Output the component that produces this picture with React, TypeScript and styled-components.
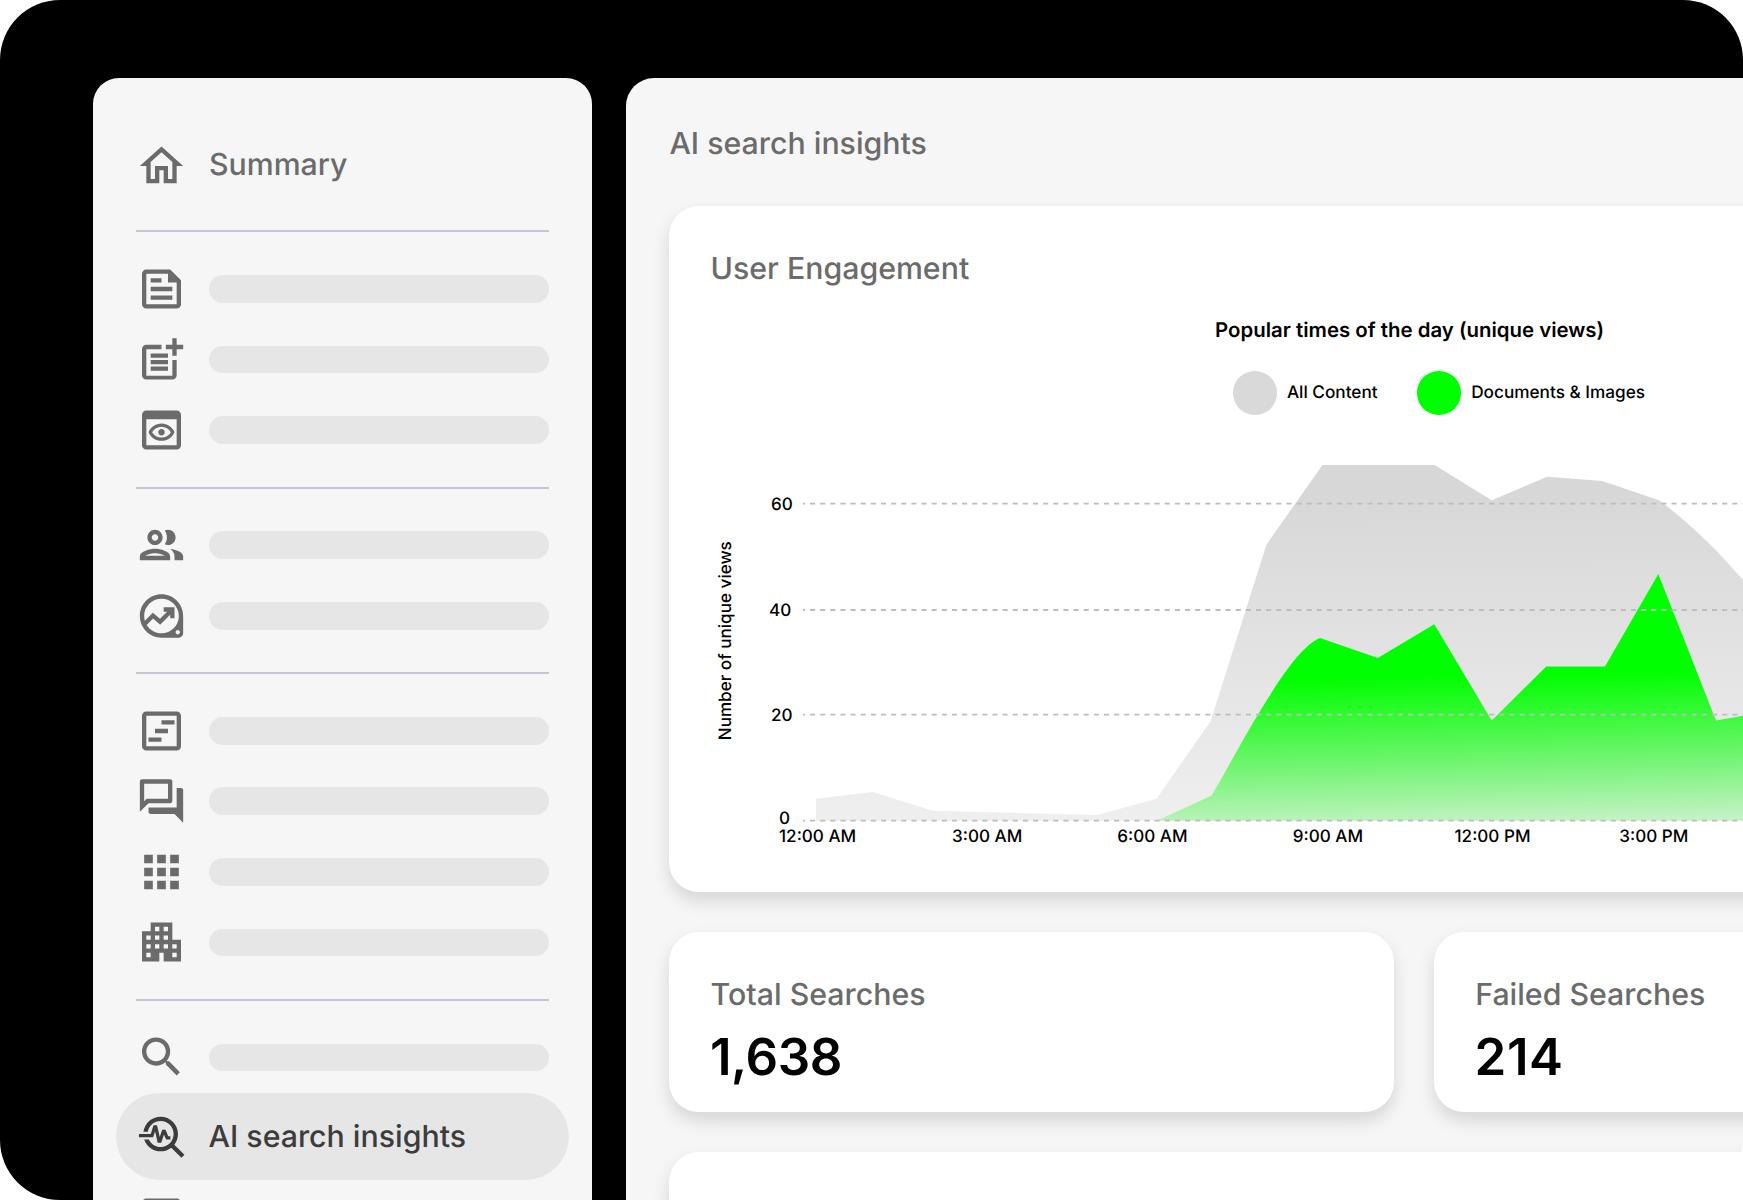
import React from 'react';
import styled, { createGlobalStyle } from 'styled-components';
import type { IconType } from 'react-icons';
import {
  MdApartment,
  MdApps,
  MdOutlineDataExploration,
  MdOutlineFeed,
  MdOutlineHome,
  MdOutlinePeople,
  MdOutlinePreview,
  MdOutlineQuestionAnswer,
  MdOutlineViewTimeline,
  MdPostAdd,
  MdSearch,
  MdTroubleshoot,
} from 'react-icons/md';

const GlobalStyle = createGlobalStyle`
  * { box-sizing: border-box; }
  body { margin: 0; background: #fff; text-rendering: geometricPrecision; }
`;

const Frame = styled.div`
  display: flex;
  gap: 34px;
  width: 1743px;
  height: 1200px;
  padding: 78px 0 0 93px;
  overflow: hidden;
  background:
    linear-gradient(#000, #000) 0 0 / 100% 120px no-repeat,
    linear-gradient(#000, #000) 0 0 / 700px 100% no-repeat;
  border-radius: 60px;
  font-family: Inter, 'Liberation Sans', sans-serif;
`;

const Sidebar = styled.nav`
  display: flex;
  flex-direction: column;
  flex: none;
  width: 499px;
  height: 1160px;
  padding: 51.7px 23px 0;
  background: #f6f6f6;
  border-radius: 26px 26px 0 0;
`;

const Group = styled.div`
  display: flex;
  flex-direction: column;
  flex: none;
  margin: 0 20.2px;
  padding: 21.2px 0;
  border-top: 2px solid #c8c4d0;
`;

const Item = styled.div<{ $active?: boolean; $tall?: boolean }>`
  display: flex;
  align-items: center;
  gap: 21.5px;
  flex: none;
  height: ${(p) => (p.$active ? 87.6 : p.$tall ? 72 : 70.6)}px;
  margin: ${(p) => (p.$active ? '0 -20.3px 2px' : '0')};
  padding: ${(p) => (p.$active ? '0 19.8px' : '0')};
  border-radius: 44px;
  background: ${(p) => (p.$active ? '#e6e6e6' : 'transparent')};
  color: ${(p) => (p.$active ? '#3c3c3c' : '#6b6b6b')};

  svg {
    flex: none;
    width: 52px;
    height: 52px;
    margin-left: -0.7px;
    transform: ${(p) => (p.$active ? 'translate(1.8px, -0.8px)' : 'translateX(-0.5px)')};
  }
`;

const Top = styled.div`
  flex: none;
  height: 100.8px;
  margin: 0 20.2px;

  span {
    margin-bottom: 1px;
  }
`;

const Placeholder = styled.div`
  flex: 1;
  height: 27.7px;
  border-radius: 14px;
  background: #e6e6e6;
`;

const Label = styled.span`
  font-size: 30.3px;
  font-weight: 500;
  line-height: 40px;
  white-space: nowrap;
`;

const Main = styled.main`
  display: flex;
  flex-direction: column;
  flex: none;
  width: 1576px;
  height: 1160px;
  padding: 46px 43.4px 0;
  background: #f6f6f6;
  border-radius: 28px 28px 0 0;
`;

const Heading = styled(Label).attrs({ as: 'h2' })`
  margin: 0;
  color: #6b6b6b;
`;

const Card = styled.section<{ $height: number }>`
  display: flex;
  flex-direction: column;
  flex: 1 0 auto;
  height: ${(p) => p.$height}px;
  padding: 43px 41.2px 0;
  background: #fff;
  border-radius: 30px;
  box-shadow: 0 8.7px 17.3px rgba(0, 0, 0, 0.13);
`;

const Stack = styled.div`
  display: flex;
  flex-direction: column;
  gap: 40.3px;
  margin-top: 41.7px;

  > ${Card} {
    flex: none;
  }
`;

const Stats = styled.div`
  display: grid;
  grid-template-columns: 1fr 1fr;
  gap: 40px;
`;

const Value = styled.strong<{ $spacing: number }>`
  margin: 12.7px 0 0 -0.7px;
  font-size: 51px;
  font-weight: 600;
  line-height: 60px;
  letter-spacing: ${(p) => p.$spacing}px;
  color: #000;
`;

const ChartTitle = styled.h3`
  margin: 28.4px 0 0 504.5px;
  font-size: 20.4px;
  font-weight: 600;
  line-height: 26px;
  white-space: nowrap;
`;

const Legend = styled.div`
  display: flex;
  gap: 39.8px;
  margin: 28px 0 0 522.5px;
`;

const LegendItem = styled.div<{ $color: string }>`
  display: flex;
  align-items: center;
  gap: 10.3px;

  &::before {
    content: '';
    width: 43.5px;
    height: 43.5px;
    border-radius: 50%;
    background: ${(p) => p.$color};
  }
`;

const LegendText = styled.span`
  margin-top: 1px;
  font-size: 17.2px;
  font-weight: 500;
  line-height: 24px;
`;

const Chart = styled.svg`
  flex: none;
  display: block;
  width: 1405px;
  height: 410px;
  margin-top: 35.5px;

  text {
    font-size: 17.1px;
    font-weight: 500;
    fill: #000;
  }
`;

const groups: IconType[][] = [
  [MdOutlineFeed, MdPostAdd, MdOutlinePreview],
  [MdOutlinePeople, MdOutlineDataExploration],
  [MdOutlineViewTimeline, MdOutlineQuestionAnswer, MdApps, MdApartment],
];

const gridLines = [503.7, 610, 714.7, 820.7];

const yLabels = [
  { text: '60', x: 771, y: 510.2 },
  { text: '40', x: 769, y: 616.2 },
  { text: '20', x: 771, y: 721.2 },
  { text: '0', x: 779, y: 824.3 },
];

const xLabels = [
  { text: '12:00 AM', x: 779 },
  { text: '3:00 AM', x: 952 },
  { text: '6:00 AM', x: 1117.3 },
  { text: '9:00 AM', x: 1292.7 },
  { text: '12:00 PM', x: 1454.5 },
  { text: '3:00 PM', x: 1619.3 },
];

const Placeholders = ({ icons }: { icons: IconType[] }) => (
  <>
    {icons.map((Icon, i) => (
      <Item key={i}>
        <Icon />
        <Placeholder />
      </Item>
    ))}
  </>
);

const EngagementChart = () => (
  <Chart viewBox="711 450 1405 410">
    <defs>
      <linearGradient id="all" gradientUnits="userSpaceOnUse" x1="1400" y1="490" x2="1402" y2="821">
        <stop offset="0" stopColor="#d7d7d7" />
        <stop offset="1" stopColor="#efefef" />
      </linearGradient>
      <linearGradient id="docs" gradientUnits="userSpaceOnUse" x1="1430" y1="676" x2="1433.5" y2="826">
        <stop offset="0" stopColor="#00ff00" />
        <stop offset="1" stopColor="#00ff00" stopOpacity="0.17" />
      </linearGradient>
    </defs>
    <path
      fill="url(#all)"
      d="M816 820.7V798.7L873 792L932.5 810.7L1097.5 815L1156.5 798.7L1210.5 721.5L1266.5 544.5L1322.5 465H1434.6L1491.7 500.3L1547 476.7L1602.3 481L1659 500.3C1690 523 1720 553 1743 580C1790 635 1830 700 1860 820.7Z"
    />
    <path
      fill="url(#docs)"
      d="M1157 820.7L1211.6 795.5C1227 770 1241 742 1258.3 714C1283 673 1303 645 1320 638L1377.8 658L1434.3 624.3L1491.7 720.5L1546.3 666.5H1605L1658.3 574L1716 720.5L1743 715.7L1800 705L1860 820.7Z"
    />
    {gridLines.map((y) => (
      <line
        key={y}
        x1="802.9"
        x2="2100"
        y1={y}
        y2={y}
        stroke="#bdbdbd"
        strokeWidth="1.8"
        strokeDasharray="5.07 5.065"
        strokeDashoffset="3"
      />
    ))}
    {yLabels.map((l) => (
      <text key={l.text} x={l.x} y={l.y}>
        {l.text}
      </text>
    ))}
    {xLabels.map((l) => (
      <text key={l.text} x={l.x} y={842.4}>
        {l.text}
      </text>
    ))}
    <text transform="translate(730.6 740.3) rotate(-90)">Number of unique views</text>
  </Chart>
);

export default function App() {
  return (
    <>
      <GlobalStyle />
      <Frame>
        <Sidebar>
          <Top>
            <Item $tall>
              <MdOutlineHome />
              <Label>Summary</Label>
            </Item>
          </Top>
          {groups.map((icons, i) => (
            <Group key={i}>
              <Placeholders icons={icons} />
            </Group>
          ))}
          <Group>
            <Placeholders icons={[MdSearch]} />
            <Item $active>
              <MdTroubleshoot />
              <Label>AI search insights</Label>
            </Item>
            <Placeholders icons={[MdOutlineViewTimeline]} />
          </Group>
        </Sidebar>
        <Main>
          <Heading>AI search insights</Heading>
          <Stack>
            <Card $height={686}>
              <Heading>User Engagement</Heading>
              <ChartTitle>Popular times of the day (unique views)</ChartTitle>
              <Legend>
                <LegendItem $color="#d9d9d9">
                  <LegendText>All Content</LegendText>
                </LegendItem>
                <LegendItem $color="#00ff00">
                  <LegendText>Documents &amp; Images</LegendText>
                </LegendItem>
              </Legend>
              <EngagementChart />
            </Card>
            <Stats>
              <Card $height={180}>
                <Heading>Total Searches</Heading>
                <Value $spacing={-0.4}>1,638</Value>
              </Card>
              <Card $height={180}>
                <Heading>Failed Searches</Heading>
                <Value $spacing={0.6}>214</Value>
              </Card>
            </Stats>
            <Card $height={300} />
          </Stack>
        </Main>
      </Frame>
    </>
  );
}
